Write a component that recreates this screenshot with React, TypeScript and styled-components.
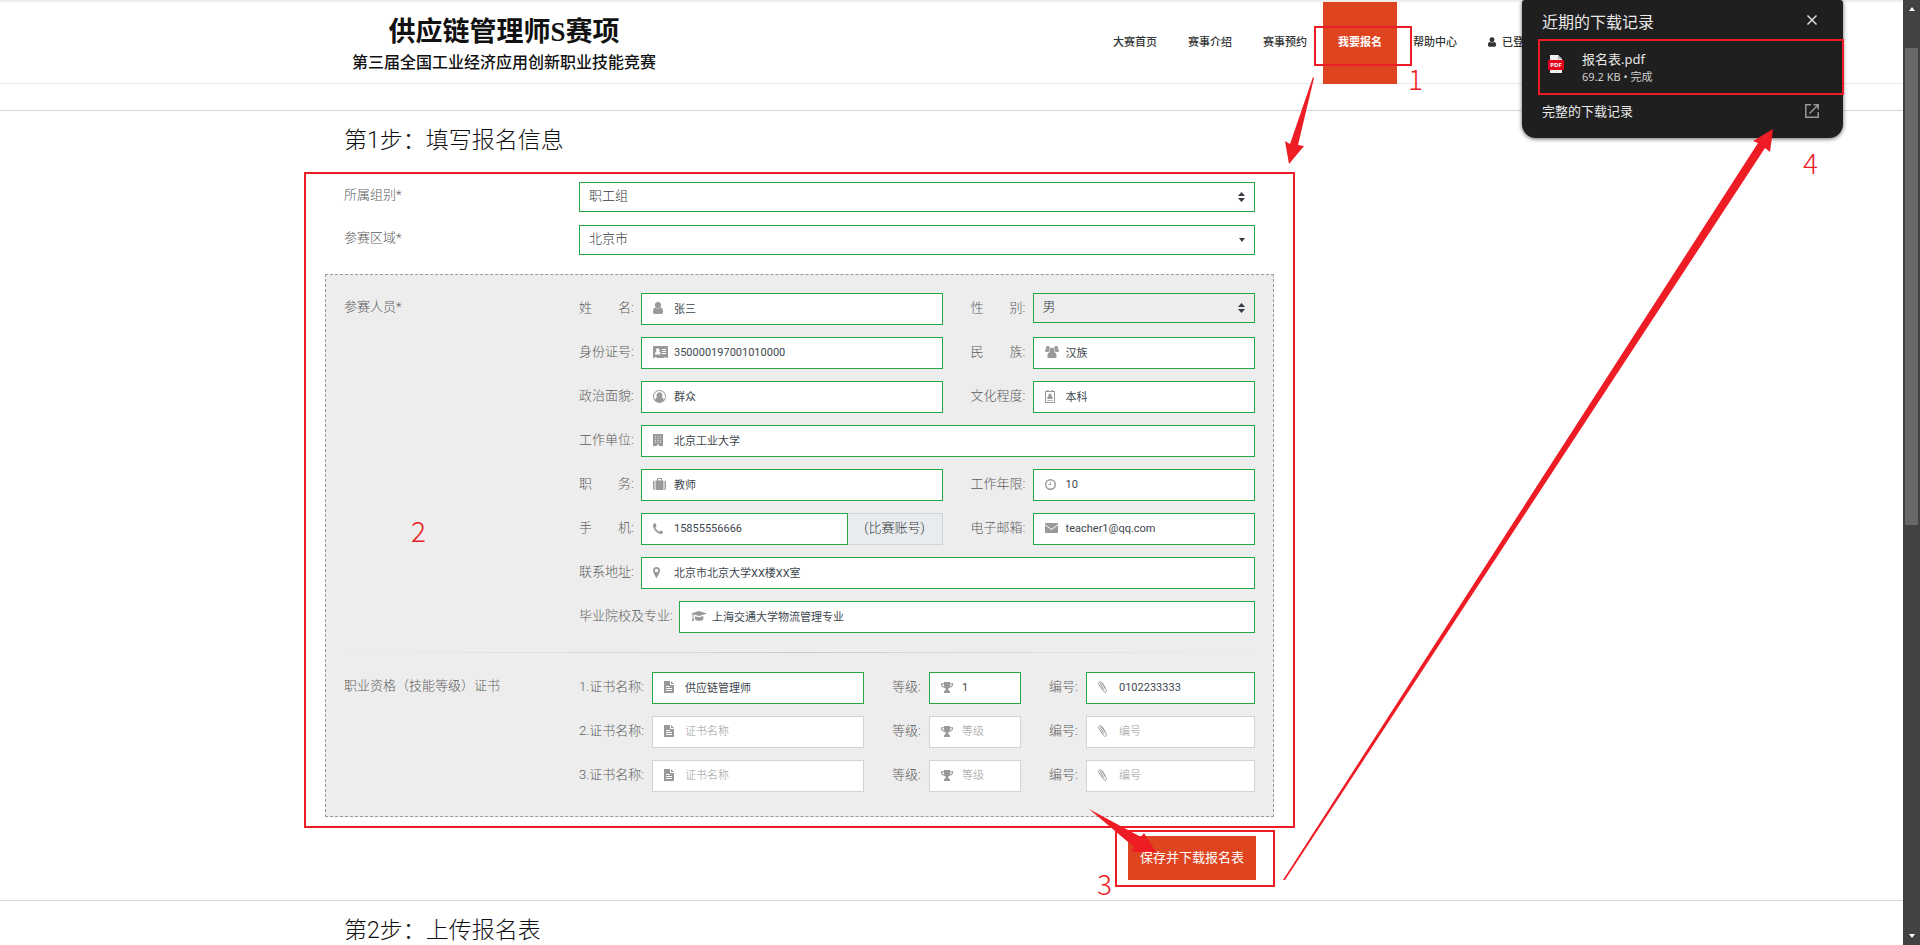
import React from "react";
import styled, { createGlobalStyle } from "styled-components";

const GlobalStyle = createGlobalStyle`
  *, *::before, *::after { box-sizing: border-box; }
  body {
    margin: 0;
    background: #fff;
    color: #5c5c5c;
    font-family: Roboto, "Noto Sans CJK SC", sans-serif;
    font-size: 13px;
    font-weight: 300;
  }
  h1, h2, p { margin: 0; font-weight: inherit; }
  input, select, button { font: inherit; margin: 0; border-radius: 0; }
`;

const GREEN = "#28a745";
const ORANGE = "#df4421";
const RED = "#ee1c25";

/* ---------- page frame ---------- */

const Page = styled.div`
  position: relative;
  display: grid;
  grid-template-columns: minmax(0, 1fr) 17px;
  min-height: 100vh;
  overflow: hidden;
`;

const Content = styled.div``;

const Container = styled.div`
  max-width: 1253px;
  margin: 0 auto;
`;

const ScrollTrack = styled.div`
  display: grid;
  grid-template-rows: 48px 477fr 402fr 18px;
  background: #424242;
  padding: 0 2px;
  justify-items: center;
`;

const ScrollThumb = styled.div`
  width: 100%;
  background: #686868;
`;

const ScrollArrow = styled.svg`
  width: 8px;
  height: 18px;
  fill: #fff;
`;

/* ---------- header ---------- */

const Header = styled.header`
  border-top: 2px solid #eee;
  border-bottom: 1px solid #eaeaea;
`;

const HeaderRow = styled(Container)`
  display: flex;
  justify-content: space-between;
  height: 81px;
  padding: 0 28px 0 27px;
`;

const Logo = styled.a`
  display: flex;
  flex-direction: column;
  align-items: center;
  padding-top: 14px;
  color: #111;
  text-decoration: none;
`;

const LogoTitle = styled.span`
  font-family: "Liberation Serif", "Noto Sans CJK SC", serif;
  font-size: 27px;
  line-height: 32px;
  font-weight: 700;
`;

const LogoSubtitle = styled.span`
  font-family: "Noto Sans CJK SC", sans-serif;
  font-size: 16px;
  line-height: 26px;
  font-weight: 500;
`;

const Nav = styled.nav`
  display: flex;
  gap: 1px;
  margin-bottom: -1px;
`;

const NavLink = styled.a<{ $active?: boolean }>`
  display: flex;
  align-items: flex-start;
  gap: 6px;
  padding: 31px 15px 0;
  font-size: 11px;
  line-height: 20px;
  font-weight: ${(p) => (p.$active ? 700 : 500)};
  color: ${(p) => (p.$active ? "#fff" : "#333")};
  background: ${(p) => (p.$active ? ORANGE : "transparent")};
  text-decoration: none;
  svg { margin-top: 4px; }
`;

/* ---------- sections ---------- */

const Section = styled.section`
  border-top: 1px solid #d6d6d6;
`;

const FirstSection = styled(Section)`
  margin-top: 26px;
  padding-bottom: 20px;
`;

const Heading = styled.h2`
  padding: 16px 19px 0;
  font-size: 23px;
  line-height: 28px;
  color: #111;
`;

const Form = styled.form`
  max-width: 949px;
  padding-top: 27px;
`;

const TopFields = styled.div`
  display: grid;
  gap: 13px;
  padding: 0 19px;
`;

const LabelledRow = styled.div`
  display: grid;
  grid-template-columns: 235px minmax(0, 1fr);
`;

const RowTitle = styled.label`
  line-height: 26px;
`;

const BoxTitle = styled.span`
  line-height: 28px;
`;

const MemberBox = styled.fieldset`
  min-width: 0;
  margin: 19px 0 0;
  padding: 18px 18px 24px;
  border: 1px dashed #999;
  background: #ededed;
`;

const Divider = styled.hr`
  height: 1px;
  margin: 19px 0;
  border: 0;
  background: linear-gradient(to right, transparent, #ccc, transparent);
`;

const Rows = styled.div`
  display: grid;
  gap: 12px;
`;

const Row = styled.div`
  display: flex;
  gap: 28px;
`;

const Field = styled.div<{ $grow?: number }>`
  display: flex;
  flex: ${(p) => p.$grow ?? 1} 1 0;
  min-width: 0;
`;

const FieldLabel = styled.label<{ $width: number }>`
  flex: none;
  width: ${(p) => p.$width}px;
  line-height: 30px;
  white-space: nowrap;
`;

const InputWrap = styled.div`
  position: relative;
  flex: 1;
  min-width: 0;
  height: 32px;
`;

const IconSlot = styled.span`
  position: absolute;
  top: 0;
  left: 12px;
  display: flex;
  align-items: center;
  height: 30px;
  color: #999;
  pointer-events: none;
`;

const Input = styled.input<{ $valid: boolean }>`
  width: 100%;
  height: 32px;
  padding: 0 8px 2px 32px;
  border: 1px solid ${(p) => (p.$valid ? GREEN : "#ced4da")};
  background: #fff;
  color: #40474e;
  font-size: 11px;
  font-weight: 400;
  outline: 0;
  &::placeholder { color: #999; opacity: 1; font-weight: 300; }
`;

const Addon = styled.span`
  width: 95px;
  height: 32px;
  border: 1px solid #ced4da;
  border-left: 0;
  background: #e9ecef;
  color: #343a40;
  line-height: 28px;
  text-align: center;
`;

const SelectWrap = styled.div`
  position: relative;
  flex: 1;
  min-width: 0;
`;

const Select = styled.select<{ $muted?: boolean }>`
  display: block;
  appearance: none;
  width: 100%;
  height: 30px;
  padding: 0 24px 3px 9px;
  border: 1px solid ${GREEN};
  background: ${(p) => (p.$muted ? "#ededed" : "#fff")};
  color: #343a40;
  outline: 0;
`;

const Caret = styled.svg`
  position: absolute;
  top: 10px;
  right: 10px;
  fill: #343a40;
  pointer-events: none;
`;

const Actions = styled.div`
  display: flex;
  justify-content: flex-end;
  padding: 19px 18px 0;
`;

const SaveButton = styled.button`
  width: 128px;
  height: 44px;
  padding: 0 0 3px;
  border: 0;
  background: ${ORANGE};
  color: #fff;
  font-weight: 400;
`;

/* ---------- download popup ---------- */

const Popup = styled.aside`
  position: absolute;
  top: 0;
  right: 77px;
  width: 321px;
  height: 138px;
  padding: 10px 20px 0;
  border-radius: 3px 3px 14px 14px;
  background: #1f1f1f;
  color: #e8e8e8;
  box-shadow: 0 1px 4px rgba(0, 0, 0, 0.6);
  font-family: "Noto Sans", "Noto Sans CJK SC", sans-serif;
  font-weight: 400;
`;

const PopupBar = styled.div`
  display: flex;
  justify-content: space-between;
  align-items: center;
  padding-right: 3px;
`;

const PopupTitle = styled.h2`
  font-size: 16px;
  line-height: 24px;
`;

const IconButton = styled.button`
  display: flex;
  padding: 0 0 4px;
  border: 0;
  background: none;
  color: #ddd;
`;

const FileRow = styled.div`
  display: flex;
  gap: 18px;
  padding: 16px 0 15px 6px;
  svg { margin-top: 5px; }
`;

const FileName = styled.p`
  line-height: 18px;
`;

const FileMeta = styled.p`
  font-size: 11px;
  line-height: 18px;
  color: #d0d0d0;
`;

const HistoryLink = styled.a`
  display: flex;
  flex: 1;
  justify-content: space-between;
  align-items: center;
  color: #e8e8e8;
  line-height: 20px;
  text-decoration: none;
  svg { color: #999; }
`;

/* ---------- guide marks drawn over the page ---------- */

const Marks = styled.div`
  position: absolute;
  inset: 0;
  pointer-events: none;
`;

const Arrows = styled.svg`
  position: absolute;
  top: 0;
  left: 0;
  fill: ${RED};
`;

const MarkBox = styled.div<{ $x: number; $y: number; $w: number; $h: number }>`
  position: absolute;
  left: ${(p) => p.$x}px;
  top: ${(p) => p.$y}px;
  width: ${(p) => p.$w}px;
  height: ${(p) => p.$h}px;
  border: 2px solid ${RED};
`;

const MarkNumber = styled.span<{ $x: number; $y: number }>`
  position: absolute;
  left: ${(p) => p.$x}px;
  top: ${(p) => p.$y}px;
  font-family: "Noto Sans CJK SC", sans-serif;
  font-size: 28px;
  line-height: 32px;
  font-weight: 300;
  color: ${RED};
`;

/* ---------- icons ---------- */

type IconName =
  | "user" | "card" | "circle" | "building" | "suitcase" | "phone" | "marker" | "cap"
  | "file" | "group" | "badge" | "clock" | "mail" | "trophy" | "clip";

const icons: Record<IconName, [number, number, React.ReactNode]> = {
  user: [10, 12, <path d="M5 0a3 3 0 0 1 0 6.200a3 3 0 0 1 0-6.200zM2.300 5.600C3.800 7 6.200 7 7.700 5.600C9.500 5.900 10 7.600 10 9.800C10 11.200 9.300 12 8 12H2C.7 12 0 11.200 0 9.800C0 7.600.5 5.900 2.300 5.600z" />],
  card: [15, 12, <path fillRule="evenodd" d="M1 0h13a1 1 0 0 1 1 1v10a1 1 0 0 1-1 1h-1v-1h-1.500v1h-8v-1H2v1H1a1 1 0 0 1-1-1V1a1 1 0 0 1 1-1zM4.800 2.300a1.800 1.800 0 0 0-1.200 3.200C2.400 5.800 2 7 2 8.500h5.600C7.600 7 7.200 5.800 6 5.500a1.800 1.800 0 0 0-1.200-3.200zM9 3v1h4V3zM9 5v1h4V5zM9 7v1h4V7z" />],
  circle: [13, 13, <path fillRule="evenodd" d="M6.500 0a6.500 6.500 0 1 1 0 13a6.500 6.500 0 0 1 0-13zM6.500 1a5.500 5.500 0 0 0-4.300 8.900C2.500 8.300 3.200 7.400 4.300 7.200A2.900 2.900 0 1 1 8.700 7.200C9.800 7.400 10.500 8.300 10.800 9.900A5.500 5.500 0 0 0 6.500 1z" />],
  building: [10, 12, <path fillRule="evenodd" d="M0 0h10v12H6v-1.500H4V12H0zM2 2v.8h1V2zM4.500 2v.8h1V2zM7 2v.8h1V2zM2 4v.8h1V4zM4.500 4v.8h1V4zM7 4v.8h1V4zM2 6v.8h1V6zM4.500 6v.8h1V6zM7 6v.8h1V6zM2 8v.8h1V8zM4.500 8v.8h1V8zM7 8v.8h1V8z" />],
  suitcase: [13, 12, <path fillRule="evenodd" d="M1.500 2.500V12A1.500 1.500 0 0 1 0 10.500V4a1.500 1.500 0 0 1 1.500-1.500zM2.500 2.500H4V1a1 1 0 0 1 1-1h3a1 1 0 0 1 1 1v1.500h1.500V12h-8zM5 1v1.500h3V1zM11.500 2.500A1.500 1.500 0 0 1 13 4v6.500a1.500 1.500 0 0 1-1.500 1.500z" />],
  phone: [10, 11, <path d="M2.200.1C1 .4 0 1.200 0 2.800c0 1.400.9 3.700 2.700 5.500S6.500 11 8 11c1.200 0 1.900-.9 2-2.100c0-.3-1.900-1.400-2.400-1.400c-.4 0-.9 1.100-1.300 1.100C5.600 8.600 2.400 5.500 2.400 4.700c0-.4 1.100-.9 1.100-1.400C3.500 2.700 2.600.1 2.200.1z" />],
  marker: [7, 11, <path fillRule="evenodd" d="M3.500 0A3.500 3.500 0 0 1 7 3.500c0 1-.3 1.600-.8 2.700L4.100 10.600q-.6.800-1.200 0L.8 6.200C.3 5.100 0 4.500 0 3.500A3.500 3.500 0 0 1 3.500 0zM3.500 1.800a1.700 1.700 0 1 0 0 3.400a1.700 1.700 0 0 0 0-3.400z" />],
  cap: [16, 11, <path d="M8 0l8 2.500L8 5L3.500 3.600C2.800 4 2.500 5 2.500 6l.6 4H1l.6-4V3L0 2.500zM4 5.200L8 6.300l4.300-1.200v3.300C11 10.300 5.300 10.300 4 8.400z" />],
  file: [10, 12, <path fillRule="evenodd" d="M0 0h6v4h4v8H0zM7 0l3 3H7zM2 5v1h4V5zM2 7v1h6V7zM2 9v1h6V9z" />],
  group: [14, 12, <path d="M7 1.800a2.600 2.600 0 0 1 0 5.200a2.600 2.600 0 0 1 0-5.200zM3 0a1.900 1.900 0 0 1 1.700 2.600C3.600 3.600 3.500 5 4 6H1.500C.5 6 0 5.500 0 4.800C0 3.500.6 3 1.500 3.200A1.900 1.900 0 0 1 3 0zM11 0a1.900 1.900 0 0 0-1.700 2.600c1.100 1 1.200 2.400.7 3.400h2.500C13.500 6 14 5.500 14 4.800c0-1.300-.6-1.800-1.500-1.600A1.900 1.900 0 0 0 11 0zM4.600 6.200c1.400 1.200 3.400 1.200 4.800 0C11 6.500 11.600 8.500 11.600 10.200c0 1.200-.6 1.800-1.700 1.800H4.100c-1.100 0-1.700-.6-1.700-1.800C2.400 8.500 3 6.500 4.600 6.200z" />],
  badge: [10, 13, <path fillRule="evenodd" d="M0 1h2V0h1.500v1h3V0H8v1h2v12H0zM1 2v10h8V2zM5 3.500a1.500 1.500 0 0 1 1.100 2.600C7.300 6.300 7.700 7.200 7.700 9H2.300c0-1.800.4-2.700 1.600-2.900A1.500 1.500 0 0 1 5 3.500zM2.300 10h5.400v.8H2.300z" />],
  clock: [11, 11, <path fillRule="evenodd" d="M5.500 0a5.500 5.500 0 1 1 0 11a5.500 5.500 0 0 1 0-11zM5.500 1.400a4.100 4.100 0 1 0 0 8.200a4.100 4.100 0 0 0 0-8.200zM5.200 2.800H6V6H3.300V5.200H5.200z" />],
  mail: [13, 10, <path d="M0 0h13v1.200L6.500 6L0 1.200zM0 2.200l6.500 4.800L13 2.200V10H0z" />],
  trophy: [12, 11, <path fillRule="evenodd" d="M3 0h6v1.200h3v1.500C12 4.300 10.300 5.600 8.400 5.800C7.800 6.500 7.100 6.800 7.100 7.600c0 .9 1.900.8 1.900 2.200V11H3V9.800c0-1.400 1.900-1.300 1.900-2.200c0-.8-.7-1.100-1.300-1.800C1.700 5.600 0 4.300 0 2.700V1.200h3zM1 2.200c0 1.100 1 2 2.200 2.400C3 3.900 3 3 3 2.200zM11 2.200H9c0 .8 0 1.700-.2 2.400C10 4.200 11 3.300 11 2.200z" />],
  clip: [9, 12, <path fill="none" stroke="currentColor" strokeWidth="1" strokeLinecap="round" d="M5.800 8.200L2.700 3.400C2 2.300 3.400 1.500 4.100 2.500l4 6.200c1.300 2.200-1.300 3.700-2.600 1.700L1.100 3.700C-.3 1.300 2.500-.6 4 1.700l3 4.600" />],
};

function Icon({ name }: { name: IconName }) {
  const [w, h, shape] = icons[name];
  return (
    <svg width={w} height={h} viewBox={`0 0 ${w} ${h}`} fill="currentColor" aria-hidden="true">
      {shape}
    </svg>
  );
}

/* ---------- form parts ---------- */

type TextFieldProps = {
  id: string;
  label: string;
  icon: IconName;
  value?: string;
  placeholder?: string;
  labelWidth?: number;
  grow?: number;
  addon?: string;
};

function TextField({ id, label, icon, value, placeholder, labelWidth = 62, grow, addon }: TextFieldProps) {
  return (
    <Field $grow={grow}>
      <FieldLabel htmlFor={id} $width={labelWidth}>{label}</FieldLabel>
      <InputWrap>
        <IconSlot><Icon name={icon} /></IconSlot>
        <Input id={id} $valid={value !== undefined} defaultValue={value} placeholder={placeholder} />
      </InputWrap>
      {addon && <Addon>{addon}</Addon>}
    </Field>
  );
}

function UpDown() {
  return (
    <Caret width="7" height="10" viewBox="0 0 7 10">
      <path d="M3.500 0L7 4H0zM0 6h7L3.500 10z" />
    </Caret>
  );
}

const navItems = ["大赛首页", "赛事介绍", "赛事预约", "我要报名", "帮助中心"];

const certificates: { name?: string; level?: string; code?: string }[] = [
  { name: "供应链管理师", level: "1", code: "0102233333" },
  {},
  {},
];

export default function App() {
  return (
    <Page>
      <GlobalStyle />
      <Content>
        <Header>
          <HeaderRow>
            <Logo href="#">
              <LogoTitle>供应链管理师S赛项</LogoTitle>
              <LogoSubtitle>第三届全国工业经济应用创新职业技能竞赛</LogoSubtitle>
            </Logo>
            <Nav>
              {navItems.map((item) => (
                <NavLink key={item} href="#" $active={item === "我要报名"}>{item}</NavLink>
              ))}
              <NavLink href="#">
                <svg width="8" height="10" viewBox="0 0 10 12" fill="currentColor">{icons.user[2]}</svg>
                已登录
              </NavLink>
            </Nav>
          </HeaderRow>
        </Header>

        <main>
          <FirstSection>
            <Container>
              <Heading>第1步：填写报名信息</Heading>
              <Form onSubmit={(e) => e.preventDefault()}>
                <TopFields>
                  <LabelledRow>
                    <RowTitle htmlFor="group">所属组别*</RowTitle>
                    <SelectWrap>
                      <Select id="group"><option>职工组</option></Select>
                      <UpDown />
                    </SelectWrap>
                  </LabelledRow>
                  <LabelledRow>
                    <RowTitle htmlFor="region">参赛区域*</RowTitle>
                    <SelectWrap>
                      <Select id="region"><option>北京市</option></Select>
                      <Caret width="6" height="10" viewBox="0 0 6 10"><path d="M0 3h6L3 7z" /></Caret>
                    </SelectWrap>
                  </LabelledRow>
                </TopFields>

                <MemberBox>
                  <LabelledRow>
                    <BoxTitle>参赛人员*</BoxTitle>
                    <Rows>
                      <Row>
                        <TextField id="name" label="姓　　名:" icon="user" value="张三" grow={363} />
                        <Field $grow={284}>
                          <FieldLabel htmlFor="gender" $width={62}>性　　别:</FieldLabel>
                          <SelectWrap>
                            <Select id="gender" $muted><option>男</option></Select>
                            <UpDown />
                          </SelectWrap>
                        </Field>
                      </Row>
                      <Row>
                        <TextField id="idno" label="身份证号:" icon="card" value="350000197001010000" grow={363} />
                        <TextField id="ethnic" label="民　　族:" icon="group" value="汉族" grow={284} />
                      </Row>
                      <Row>
                        <TextField id="political" label="政治面貌:" icon="circle" value="群众" grow={363} />
                        <TextField id="education" label="文化程度:" icon="badge" value="本科" grow={284} />
                      </Row>
                      <Row>
                        <TextField id="company" label="工作单位:" icon="building" value="北京工业大学" />
                      </Row>
                      <Row>
                        <TextField id="job" label="职　　务:" icon="suitcase" value="教师" grow={363} />
                        <TextField id="years" label="工作年限:" icon="clock" value="10" grow={284} />
                      </Row>
                      <Row>
                        <TextField id="phone" label="手　　机:" icon="phone" value="15855556666" addon="(比赛账号)" grow={363} />
                        <TextField id="email" label="电子邮箱:" icon="mail" value="teacher1@qq.com" grow={284} />
                      </Row>
                      <Row>
                        <TextField id="address" label="联系地址:" icon="marker" value="北京市北京大学XX楼XX室" />
                      </Row>
                      <Row>
                        <TextField id="school" label="毕业院校及专业:" icon="cap" value="上海交通大学物流管理专业" labelWidth={100} />
                      </Row>
                    </Rows>
                  </LabelledRow>
                  <Divider />
                  <LabelledRow>
                    <BoxTitle>职业资格（技能等级）证书</BoxTitle>
                    <Rows>
                      {certificates.map((c, i) => (
                        <Row key={i}>
                          <TextField id={`cert${i}`} label={`${i + 1}.证书名称:`} icon="file" value={c.name} placeholder="证书名称" labelWidth={73} grow={285} />
                          <TextField id={`level${i}`} label="等级:" icon="trophy" value={c.level} placeholder="等级" labelWidth={37} grow={129} />
                          <TextField id={`code${i}`} label="编号:" icon="clip" value={c.code} placeholder="编号" labelWidth={37} grow={206} />
                        </Row>
                      ))}
                    </Rows>
                  </LabelledRow>
                </MemberBox>

                <Actions>
                  <SaveButton type="submit">保存并下载报名表</SaveButton>
                </Actions>
              </Form>
            </Container>
          </FirstSection>
          <Section>
            <Container>
              <Heading>第2步：上传报名表</Heading>
            </Container>
          </Section>
        </main>
      </Content>

      <ScrollTrack aria-hidden="true">
        <ScrollArrow viewBox="0 0 8 18"><path d="M1 11h6L4 7z" /></ScrollArrow>
        <ScrollThumb />
        <span />
        <ScrollArrow viewBox="0 0 8 18"><path d="M1 7h6L4 11z" /></ScrollArrow>
      </ScrollTrack>

      <Popup>
        <PopupBar>
          <PopupTitle>近期的下载记录</PopupTitle>
          <IconButton type="button" aria-label="关闭">
            <svg width="16" height="16" viewBox="0 0 16 16" stroke="currentColor" strokeWidth="1.500">
              <path d="M3.500 3.500l9 9M12.500 3.500l-9 9" />
            </svg>
          </IconButton>
        </PopupBar>
        <FileRow>
          <svg width="16" height="18" viewBox="0 0 16 18" aria-hidden="true">
            <path d="M2 0h8l4 4v14H2z" fill="#f1f1f1" />
            <path d="M10 0l4 4h-4z" fill="#b5b5b5" />
            <rect y="5" width="16" height="10" rx="1" fill="#e2001a" />
            <text x="8" y="12" fontSize="6" fontWeight="700" textAnchor="middle" fill="#fff">PDF</text>
          </svg>
          <div>
            <FileName>报名表.pdf</FileName>
            <FileMeta>69.2 KB • 完成</FileMeta>
          </div>
        </FileRow>
        <PopupBar>
          <HistoryLink href="#">
            完整的下载记录
            <svg width="16" height="16" viewBox="0 0 16 16" fill="none" stroke="currentColor" strokeWidth="1.500">
              <path d="M7 1.800H1.800v12.400h12.400V9M9.500 1.800h4.700v4.700M14.200 1.800L5.500 10.500" />
            </svg>
          </HistoryLink>
        </PopupBar>
      </Popup>

      <Marks aria-hidden="true">
        <MarkBox $x={1314} $y={26} $w={98} $h={40} />
        <MarkBox $x={304} $y={172} $w={991} $h={656} />
        <MarkBox $x={1115} $y={830} $w={160} $h={57} />
        <MarkBox $x={1538} $y={39} $w={306} $h={56} />
        <Arrows width="1903" height="945" viewBox="0 0 1903 945">
          <path d="M1313 77L1314 78L1298 145L1304 146L1289 164L1285 141L1290 144z" />
          <path d="M1089 809L1141 837L1144 833L1156 852L1131 852L1134 847z" />
          <path d="M1283 880L1758 143L1753 141L1773 129L1770 152L1765 148L1285 880z" />
        </Arrows>
        <MarkNumber $x={1408} $y={62}>1</MarkNumber>
        <MarkNumber $x={411} $y={514}>2</MarkNumber>
        <MarkNumber $x={1097} $y={867}>3</MarkNumber>
        <MarkNumber $x={1803} $y={146}>4</MarkNumber>
      </Marks>
    </Page>
  );
}
